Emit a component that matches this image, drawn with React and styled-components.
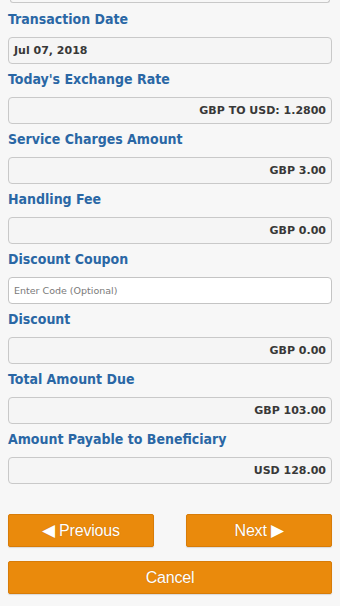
import React from 'react';
import styled, { createGlobalStyle } from 'styled-components';

const GlobalStyle = createGlobalStyle`
    html, body {
        margin: 0;
        padding: 0;
        background: #f7f7f7;
    }
    * { box-sizing: border-box; }
`;

const fields = [
    { label: 'Transaction Date', value: 'Jul 07, 2018', align: 'left' },
    { label: "Today's Exchange Rate", value: 'GBP TO USD: 1.2800' },
    { label: 'Service Charges Amount', value: 'GBP 3.00' },
    { label: 'Handling Fee', value: 'GBP 0.00' },
    { label: 'Discount Coupon', input: true, placeholder: 'Enter Code (Optional)' },
    { label: 'Discount', value: 'GBP 0.00' },
    { label: 'Total Amount Due', value: 'GBP 103.00' },
    { label: 'Amount Payable to Beneficiary', value: 'USD 128.00' },
];

const App = () => {
    return (
        <>
            <GlobalStyle />
            <Page>
                <TopEdge />
                <Form>
                    {fields.map((f) => (
                        <Field key={f.label}>
                            <Label>{f.label}</Label>
                            {f.input ? (
                                <CodeInput type="text" placeholder={f.placeholder} />
                            ) : (
                                <ReadOnly $align={f.align}>{f.value}</ReadOnly>
                            )}
                        </Field>
                    ))}
                </Form>
                <NavRow>
                    <Button>
                        <Arrow $side="left">&#9664;</Arrow>Previous
                    </Button>
                    <Button>
                        Next<Arrow $side="right">&#9654;</Arrow>
                    </Button>
                </NavRow>
                <Button $wide>Cancel</Button>
            </Page>
        </>
    );
};

const Page = styled.div`
    width: 340px;
    min-height: 606px;
    padding: 0 8px 12px;
    background: #f7f7f7;
    display: flex;
    flex-direction: column;
`;

const TopEdge = styled.div`
    height: 3px;
    margin: 0 2px;
    border: 1px solid #c8c8c8;
    border-top: none;
    border-radius: 0 0 4px 4px;
`;

const Form = styled.div`
    display: flex;
    flex-direction: column;
    padding-top: 6px;
`;

const Field = styled.div`
    display: flex;
    flex-direction: column;
    margin-bottom: 5px;
`;

const Label = styled.div`
    font-family: "DejaVu Sans Condensed", "DejaVu Sans", sans-serif;
    font-weight: bold;
    font-size: 14px;
    line-height: 20px;
    color: #2a67a5;
    margin-bottom: 8px;
`;

const ReadOnly = styled.div`
    height: 27px;
    border: 1px solid #c9c9c9;
    border-radius: 4px;
    background: #f5f5f5;
    padding: 0 5px;
    display: flex;
    align-items: center;
    justify-content: ${(p) => (p.$align === 'left' ? 'flex-start' : 'flex-end')};
    font-family: "DejaVu Sans", Verdana, sans-serif;
    font-weight: bold;
    font-size: 11px;
    color: #383838;
`;

const CodeInput = styled.input`
    height: 27px;
    border: 1px solid #c4c4c4;
    border-radius: 4px;
    background: #fff;
    padding: 0 5px;
    font-family: "DejaVu Sans", Verdana, sans-serif;
    font-size: 9.5px;
    outline: none;

    &::placeholder {
        color: #7a7a7a;
    }
`;

const NavRow = styled.div`
    display: flex;
    justify-content: space-between;
    margin-top: 25px;
    margin-bottom: 14px;
`;

const Button = styled.button`
    width: ${(p) => (p.$wide ? '100%' : '146px')};
    height: 33px;
    display: flex;
    align-items: center;
    justify-content: center;
    background: #ea8a0c;
    border: 1px solid #d87c08;
    border-radius: 2px;
    color: #fff;
    font-family: "Liberation Sans", Arial, sans-serif;
    font-size: 16px;
    letter-spacing: -0.2px;
    text-shadow: 0 0 1px rgba(120, 60, 0, 0.4);
    box-shadow: 0 1px 1px rgba(0, 0, 0, 0.12);
    cursor: pointer;
`;

const Arrow = styled.span`
    font-size: 17px;
    margin-right: ${(p) => (p.$side === 'left' ? '4px' : '0')};
    margin-left: ${(p) => (p.$side === 'right' ? '4px' : '0')};
`;

export default App;
